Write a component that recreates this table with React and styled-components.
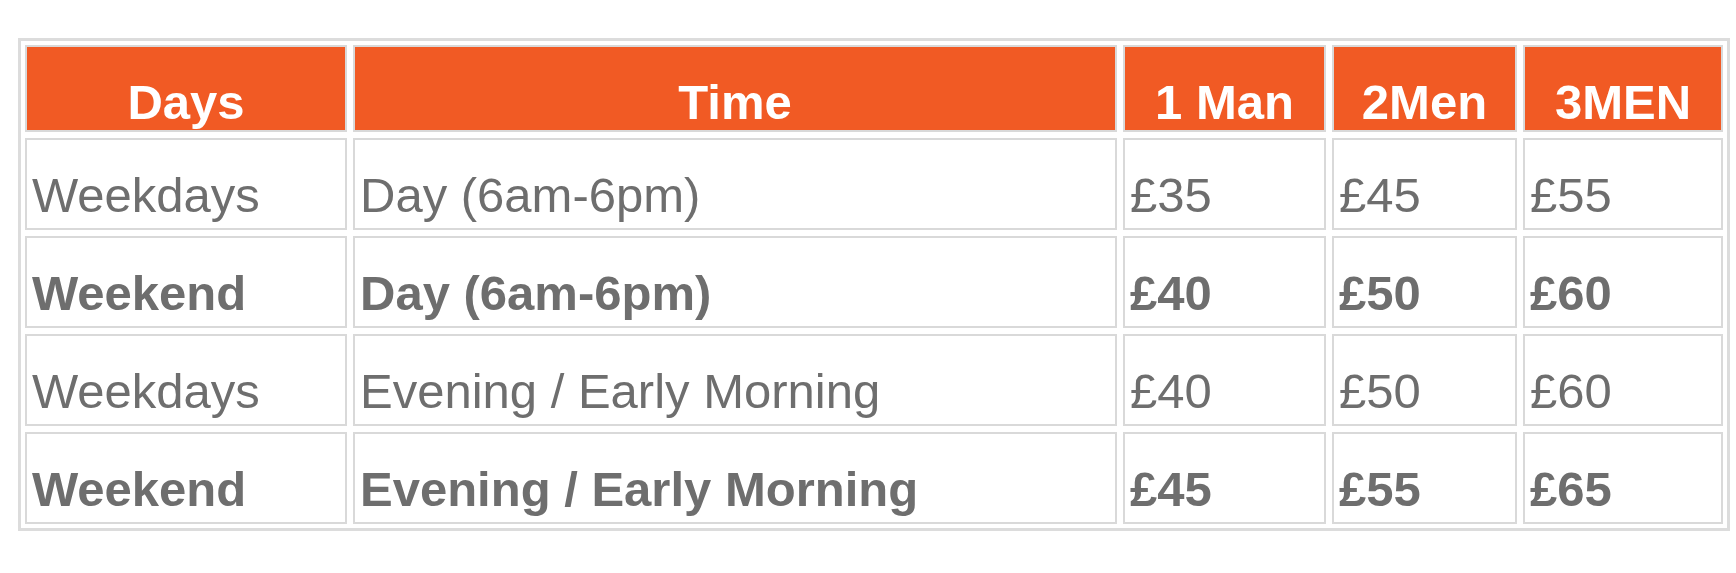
import styled, { createGlobalStyle } from "styled-components";

const GlobalStyle = createGlobalStyle`
    body {
        margin: 0;
        background: #ffffff;
        font-family: "Liberation Sans", Arial, sans-serif;
    }
`

const headers = ['Days', 'Time', '1 Man', '2Men', '3MEN']

const rows = [
    { bold: false, cells: ['Weekdays', 'Day (6am-6pm)', '£35', '£45', '£55'] },
    { bold: true, cells: ['Weekend', 'Day (6am-6pm)', '£40', '£50', '£60'] },
    { bold: false, cells: ['Weekdays', 'Evening / Early Morning', '£40', '£50', '£60'] },
    { bold: true, cells: ['Weekend', 'Evening / Early Morning', '£45', '£55', '£65'] },
]

const App = () => {
    return (
        <>
            <GlobalStyle />
            <PriceTable>
                {headers.map((h) => (
                    <Head_Cell key={h}>{h}</Head_Cell>
                ))}
                {rows.map((row, i) =>
                    row.cells.map((c, j) => (
                        <Cell key={`${i}-${j}`} $bold={row.bold}>{c}</Cell>
                    ))
                )}
            </PriceTable>
        </>
    )
}

const PriceTable = styled.div`
    margin: 38px 0 0 18px;
    width: fit-content;
    padding: 4px;
    border: 3px solid #dcdcdc;

    display: grid;
    grid-template-columns: 322px 764px 203px 185px 200px;
    grid-template-rows: 87px repeat(4, 92px);
    gap: 6px;
`

const Cell = styled.div`
    box-sizing: border-box;
    padding: 31px 5px 0;
    border: 2px solid #d9d9d9;

    font-family: "Liberation Sans", Arial, sans-serif;
    font-size: 49px;
    line-height: 1;
    font-weight: ${(props) => (props.$bold ? 700 : 400)};
    color: #6e6e6e;
    white-space: nowrap;
`

const Head_Cell = styled(Cell)`
    background-color: #f15a24;
    color: #ffffff;
    font-weight: 700;
    text-align: center;
`

export default App;
